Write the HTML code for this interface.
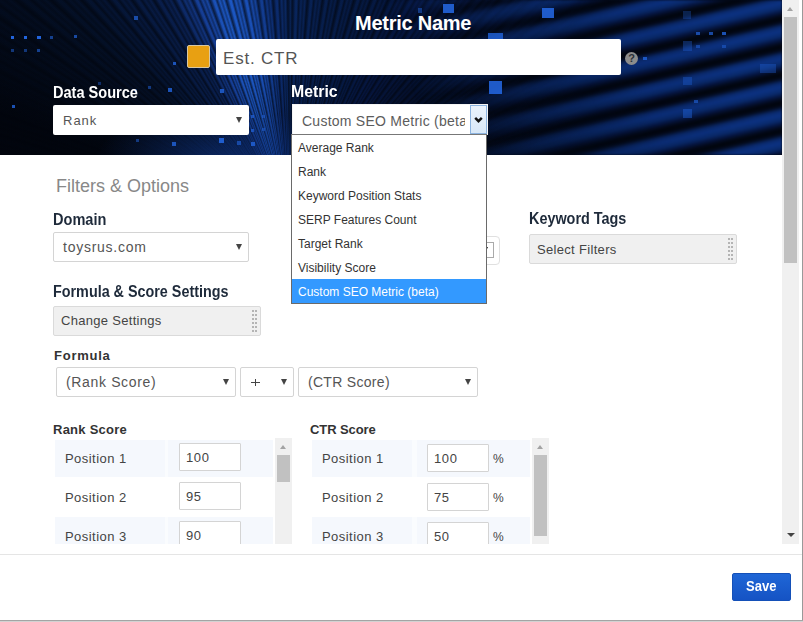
<!DOCTYPE html>
<html><head><meta charset="utf-8">
<style>
*{box-sizing:border-box;margin:0;padding:0}
html,body{width:803px;height:622px;overflow:hidden;background:#fff;font-family:"Liberation Sans",sans-serif}
.a{position:absolute}
.t{position:absolute;white-space:nowrap}
#hdr{left:0;top:0;width:782px;height:155px;background:#030916;overflow:hidden}
#hdr .L{position:absolute;left:0;top:0;width:782px;height:155px}
.sq{position:absolute;background:#2264dc}
.wbox{background:#fff;border-radius:2px}
.arr{position:absolute;width:0;height:0;border-left:3.5px solid transparent;border-right:3.5px solid transparent;border-top:6px solid #444}
.lblw{color:#fff;font-weight:bold}
.lbld{color:#1e2a3a;font-weight:bold}
.sel{position:absolute;background:#fff;border:1px solid #d4d4d4;border-radius:2px}
.gbox{position:absolute;background:#f0f0f0;border:1px solid #dadada;border-radius:2px}
.grip{position:absolute;width:6px;background-image:radial-gradient(circle,#b8b8b8 0.9px,transparent 1.1px);background-size:4px 4px}
.row{position:absolute;background:#f5f8fd}
.inp{position:absolute;background:#fff;border:1px solid #d4d4d4;border-radius:1px}
</style></head><body>
<div id="hdr" class="a">
<div class="L" style="background:conic-gradient(from 0deg at 290px 220px, #0a2860 0deg, #09245a 3deg, #071e4c 10deg, #061a44 20deg, #061640 30deg, #05112e 45deg, #030a1c 60deg, #02060f 90deg, #030816 100deg, #02050c 255deg, #02050d 290deg, #051128 315deg, #061636 320deg, #0a2050 331deg, #163f98 337deg, #1e5ccc 343deg, #1a50b8 349deg, #0c2c70 356deg, #0a2860 360deg)"></div>
<div class="L" style="filter:blur(0.5px);background:repeating-conic-gradient(from 0deg at 290px 220px, rgba(2,6,15,0.05) 0deg, rgba(2,6,15,0.7) 0.6deg, rgba(2,6,15,0.45) 1deg, rgba(2,6,15,0.05) 1.4deg, rgba(2,6,15,0.0) 1.8deg, rgba(2,6,15,0.6) 2.3deg, rgba(2,6,15,0.05) 2.9deg, rgba(2,6,15,0.4) 3.4deg, rgba(2,6,15,0.05) 3.9deg)"></div>
<div class="L" style="background:radial-gradient(ellipse 110px 130px at 290px 200px, rgba(3,10,30,0.55), rgba(3,10,30,0.3) 50%, rgba(3,10,30,0) 100%)"></div>
<div class="L" style="background:radial-gradient(ellipse 130px 50px at 225px 160px, rgba(16,56,140,0.6), rgba(16,56,140,0) 100%)"></div>
<div class="L" style="filter:blur(1.2px);background:repeating-linear-gradient(167deg, #030a1c 0px, #01040c 3px, #030a1c 6.5px, #0a2a6e 11px, #0c3282 15px, #092a6c 20px, #051540 24px, #030a1c 27.3px);-webkit-mask-image:linear-gradient(70deg, transparent 52%, rgba(0,0,0,0.5) 65%, rgba(0,0,0,0.9) 80%, #000 92%)"></div>
<div class="sq" style="left:11px;top:36px;width:3px;height:3px;opacity:1"></div>
<div class="sq" style="left:24px;top:36px;width:3px;height:3px;opacity:1"></div>
<div class="sq" style="left:37px;top:36px;width:4px;height:3px;opacity:1"></div>
<div class="sq" style="left:50px;top:36px;width:3px;height:3px;opacity:0.6"></div>
<div class="sq" style="left:74px;top:35px;width:3px;height:3px;opacity:0.7"></div>
<div class="sq" style="left:11px;top:49px;width:3px;height:3px;opacity:0.5"></div>
<div class="sq" style="left:24px;top:49px;width:3px;height:3px;opacity:0.5"></div>
<div class="sq" style="left:37px;top:49px;width:3px;height:3px;opacity:0.6"></div>
<div class="sq" style="left:12px;top:105px;width:3px;height:3px;opacity:0.8"></div>
<div class="sq" style="left:134px;top:16px;width:4px;height:4px;opacity:0.7"></div>
<div class="sq" style="left:173px;top:62px;width:3px;height:3px;opacity:0.8"></div>
<div class="sq" style="left:98px;top:82px;width:3px;height:3px;opacity:0.4"></div>
<div class="sq" style="left:148px;top:86px;width:3px;height:3px;opacity:0.5"></div>
<div class="sq" style="left:168px;top:88px;width:4px;height:4px;opacity:0.8"></div>
<div class="sq" style="left:220px;top:89px;width:4px;height:4px;opacity:0.8"></div>
<div class="sq" style="left:134px;top:89px;width:3px;height:3px;opacity:0.4"></div>
<div class="sq" style="left:136px;top:139px;width:3px;height:3px;opacity:0.5"></div>
<div class="sq" style="left:172px;top:142px;width:4px;height:4px;opacity:0.8"></div>
<div class="sq" style="left:219px;top:138px;width:5px;height:5px;opacity:0.9"></div>
<div class="sq" style="left:237px;top:141px;width:4px;height:4px;opacity:0.6"></div>
<div class="sq" style="left:251px;top:142px;width:4px;height:4px;opacity:0.8"></div>
<div class="sq" style="left:251px;top:115px;width:3px;height:3px;opacity:0.7"></div>
<div class="sq" style="left:251px;top:129px;width:3px;height:3px;opacity:0.7"></div>
<div class="sq" style="left:262px;top:115px;width:3px;height:3px;opacity:0.5"></div>
<div class="sq" style="left:262px;top:128px;width:3px;height:3px;opacity:0.5"></div>
<div class="sq" style="left:443px;top:4px;width:11px;height:9px;opacity:0.9"></div>
<div class="sq" style="left:418px;top:8px;width:4px;height:5px;opacity:0.5"></div>
<div class="sq" style="left:542px;top:8px;width:12px;height:10px;opacity:0.9"></div>
<div class="sq" style="left:488px;top:33px;width:15px;height:6px;opacity:0.8"></div>
<div class="sq" style="left:489px;top:81px;width:13px;height:13px;opacity:0.9"></div>
<div class="sq" style="left:696px;top:32px;width:4px;height:3px;opacity:0.7"></div>
<div class="sq" style="left:709px;top:32px;width:4px;height:3px;opacity:0.7"></div>
<div class="sq" style="left:722px;top:32px;width:4px;height:3px;opacity:0.8"></div>
<div class="sq" style="left:696px;top:45px;width:4px;height:3px;opacity:0.5"></div>
<div class="sq" style="left:722px;top:45px;width:4px;height:3px;opacity:0.5"></div>
<div class="sq" style="left:683px;top:41px;width:9px;height:10px;opacity:0.35"></div>
<div class="sq" style="left:683px;top:77px;width:9px;height:8px;opacity:0.35"></div>
<div class="sq" style="left:683px;top:109px;width:9px;height:9px;opacity:0.45"></div>
<div class="sq" style="left:694px;top:100px;width:4px;height:3px;opacity:0.6"></div>
<div class="sq" style="left:643px;top:57px;width:4px;height:3px;opacity:0.8"></div>
<div class="sq" style="left:760px;top:64px;width:16px;height:9px;opacity:0.35"></div>
<div class="sq" style="left:683px;top:11px;width:8px;height:8px;opacity:0.3"></div>
</div>

<!-- header content -->
<div class="t lblw" style="left:355px;top:13px;font-size:20px;line-height:20px;letter-spacing:-0.25px">Metric Name</div>
<div class="a" style="left:187px;top:45px;width:23px;height:23px;background:#e8a012;border:1px solid #d8c7a2;border-radius:2px"></div>
<div class="a wbox" style="left:216px;top:39px;width:405px;height:36px"></div>
<div class="t" style="left:223px;top:50px;font-size:17px;line-height:17px;color:#555;letter-spacing:0.8px">Est. CTR</div>
<div class="a" style="left:625px;top:52px;width:13px;height:13px;border-radius:50%;background:#8c8c8c;color:#2a2f38;font-size:11px;line-height:13px;text-align:center;font-weight:bold">?</div>

<div class="t lblw" style="left:53px;top:85px;font-size:16px;line-height:16px;transform:scaleX(0.91);transform-origin:0 0">Data Source</div>
<div class="a wbox" style="left:53px;top:105px;width:196px;height:30px"></div>
<div class="t" style="left:63px;top:114px;font-size:13px;line-height:13px;color:#555;letter-spacing:1.0px">Rank</div>
<div class="arr" style="left:236px;top:117px"></div>

<div class="t lblw" style="left:291px;top:84px;font-size:16px;line-height:16px;transform:scaleX(0.99);transform-origin:0 0">Metric</div>
<div class="a" style="left:292px;top:104px;width:196px;height:31px;background:#fff;border:1px solid #f4f4f4;border-bottom:none"></div>
<div class="a" style="left:292px;top:105px;width:173px;height:29px;overflow:hidden"><div class="t" style="left:10px;top:9px;font-size:14px;line-height:14px;color:#5c5c5c;letter-spacing:0.25px">Custom SEO Metric (beta)</div></div>
<div class="a" style="left:470px;top:105px;width:17px;height:29px;background:linear-gradient(#eaf3fc,#d8e8f8);border:1px solid #8cb4e0"></div>
<svg class="a" style="left:473px;top:115px" width="11" height="9" viewBox="0 0 11 9"><path d="M2.2 2.8 L5.5 6.2 L8.8 2.8" fill="none" stroke="#111" stroke-width="2.4"/></svg>

<!-- Body -->
<div class="t" style="left:56px;top:177px;font-size:18px;line-height:18px;color:#888">Filters &amp; Options</div>

<div class="t lbld" style="left:53px;top:212px;font-size:16px;line-height:16px;transform:scaleX(0.91);transform-origin:0 0">Domain</div>
<div class="sel" style="left:53px;top:232px;width:196px;height:30px"></div>
<div class="t" style="left:63px;top:240px;font-size:14px;line-height:14px;color:#555;letter-spacing:0.75px">toysrus.com</div>
<div class="arr" style="left:236px;top:244px"></div>

<!-- hidden select behind dropdown -->
<div class="a" style="left:460px;top:236px;width:40px;height:29px;border:1px solid #e0e0e0;border-radius:4px;background:#fff"></div>
<div class="a" style="left:470px;top:242px;width:24px;height:16px;border:1px solid #aaa;background:#fff"></div>
<div class="arr" style="left:482px;top:247px;border-top-color:#111"></div>

<div class="t lbld" style="left:529px;top:211px;font-size:16px;line-height:16px;transform:scaleX(0.9);transform-origin:0 0">Keyword Tags</div>
<div class="gbox" style="left:529px;top:234px;width:208px;height:30px"></div>
<div class="t" style="left:537px;top:243px;font-size:13px;line-height:13px;color:#444;letter-spacing:0.32px">Select Filters</div>
<svg class="a" style="left:728px;top:238px" width="5" height="22" fill="#b4b4b4"><rect x="0" y="0" width="2" height="2"/><rect x="3" y="0" width="2" height="2"/><rect x="0" y="4" width="2" height="2"/><rect x="3" y="4" width="2" height="2"/><rect x="0" y="8" width="2" height="2"/><rect x="3" y="8" width="2" height="2"/><rect x="0" y="12" width="2" height="2"/><rect x="3" y="12" width="2" height="2"/><rect x="0" y="16" width="2" height="2"/><rect x="3" y="16" width="2" height="2"/><rect x="0" y="20" width="2" height="2"/><rect x="3" y="20" width="2" height="2"/></svg>

<div class="t lbld" style="left:53px;top:284px;font-size:16px;line-height:16px;transform:scaleX(0.897);transform-origin:0 0">Formula &amp; Score Settings</div>
<div class="gbox" style="left:53px;top:306px;width:208px;height:30px"></div>
<div class="t" style="left:61px;top:314px;font-size:13px;line-height:13px;color:#444;letter-spacing:0.3px">Change Settings</div>
<svg class="a" style="left:252px;top:310px" width="5" height="22" fill="#b4b4b4"><rect x="0" y="0" width="2" height="2"/><rect x="3" y="0" width="2" height="2"/><rect x="0" y="4" width="2" height="2"/><rect x="3" y="4" width="2" height="2"/><rect x="0" y="8" width="2" height="2"/><rect x="3" y="8" width="2" height="2"/><rect x="0" y="12" width="2" height="2"/><rect x="3" y="12" width="2" height="2"/><rect x="0" y="16" width="2" height="2"/><rect x="3" y="16" width="2" height="2"/><rect x="0" y="20" width="2" height="2"/><rect x="3" y="20" width="2" height="2"/></svg>

<div class="t" style="left:54px;top:349px;font-size:13px;line-height:13px;color:#333;font-weight:bold;letter-spacing:0.75px">Formula</div>
<div class="sel" style="left:56px;top:367px;width:180px;height:30px"></div>
<div class="t" style="left:66px;top:375px;font-size:14px;line-height:14px;color:#555;letter-spacing:0.65px">(Rank Score)</div>
<div class="arr" style="left:223px;top:379px"></div>
<div class="sel" style="left:240px;top:367px;width:54px;height:30px"></div>
<div class="a" style="left:251px;top:382px;width:9px;height:1.3px;background:#444"></div><div class="a" style="left:254.8px;top:379px;width:1.3px;height:7px;background:#444"></div>
<div class="arr" style="left:281px;top:379px"></div>
<div class="sel" style="left:298px;top:367px;width:180px;height:30px"></div>
<div class="t" style="left:308px;top:375px;font-size:14px;line-height:14px;color:#555;letter-spacing:0.3px">(CTR Score)</div>
<div class="arr" style="left:465px;top:379px"></div>

<div class="t" style="left:53px;top:423px;font-size:13px;line-height:13px;color:#333;font-weight:bold;letter-spacing:0.25px">Rank Score</div>
<div class="t" style="left:310px;top:423px;font-size:13px;line-height:13px;color:#333;font-weight:bold;letter-spacing:-0.1px">CTR Score</div>

<!-- Rank score table -->
<div class="a" style="left:55px;top:438px;width:238px;height:106px;overflow:hidden">
  <div class="row" style="left:0;top:2px;width:218px;height:37px;background:linear-gradient(90deg,#f5f8fd 110px,#fafcfe 110px,#fafcfe 113px,#f5f8fd 113px)"></div>
  <div class="row" style="left:0;top:79px;width:218px;height:37px;background:linear-gradient(90deg,#f5f8fd 110px,#fafcfe 110px,#fafcfe 113px,#f5f8fd 113px)"></div>
  <div class="t" style="left:10px;top:14px;font-size:13px;line-height:13px;color:#444;letter-spacing:0.45px">Position 1</div>
  <div class="t" style="left:10px;top:53px;font-size:13px;line-height:13px;color:#444;letter-spacing:0.45px">Position 2</div>
  <div class="t" style="left:10px;top:92px;font-size:13px;line-height:13px;color:#444;letter-spacing:0.45px">Position 3</div>
  <div class="inp" style="left:124px;top:5px;width:62px;height:28px"></div>
  <div class="inp" style="left:124px;top:44px;width:62px;height:28px"></div>
  <div class="inp" style="left:124px;top:83px;width:62px;height:28px"></div>
  <div class="t" style="left:131px;top:13px;font-size:13px;line-height:13px;color:#444;letter-spacing:0.6px">100</div>
  <div class="t" style="left:131px;top:52px;font-size:13px;line-height:13px;color:#444;letter-spacing:0.6px">95</div>
  <div class="t" style="left:131px;top:91px;font-size:13px;line-height:13px;color:#444;letter-spacing:0.6px">90</div>
  <div class="a" style="left:220px;top:0;width:17px;height:106px;background:#f0f0f0"></div>
  <div class="a" style="left:222px;top:17px;width:13px;height:27px;background:#c1c1c1"></div>
  <div class="a" style="left:225px;top:7px;width:0;height:0;border-left:3.5px solid transparent;border-right:3.5px solid transparent;border-bottom:4px solid #a3a3a3"></div>
</div>

<!-- CTR score table -->
<div class="a" style="left:312px;top:438px;width:238px;height:106px;overflow:hidden">
  <div class="row" style="left:0;top:2px;width:218px;height:37px;background:linear-gradient(90deg,#f5f8fd 100px,#fafcfe 100px,#fafcfe 105px,#f5f8fd 105px)"></div>
  <div class="row" style="left:0;top:79px;width:218px;height:37px;background:linear-gradient(90deg,#f5f8fd 100px,#fafcfe 100px,#fafcfe 105px,#f5f8fd 105px)"></div>
  <div class="t" style="left:10px;top:14px;font-size:13px;line-height:13px;color:#444;letter-spacing:0.45px">Position 1</div>
  <div class="t" style="left:10px;top:53px;font-size:13px;line-height:13px;color:#444;letter-spacing:0.45px">Position 2</div>
  <div class="t" style="left:10px;top:92px;font-size:13px;line-height:13px;color:#444;letter-spacing:0.45px">Position 3</div>
  <div class="inp" style="left:115px;top:6px;width:62px;height:28px"></div>
  <div class="inp" style="left:115px;top:45px;width:62px;height:28px"></div>
  <div class="inp" style="left:115px;top:84px;width:62px;height:28px"></div>
  <div class="t" style="left:122px;top:14px;font-size:13px;line-height:13px;color:#444;letter-spacing:0.6px">100</div>
  <div class="t" style="left:122px;top:53px;font-size:13px;line-height:13px;color:#444;letter-spacing:0.6px">75</div>
  <div class="t" style="left:122px;top:92px;font-size:13px;line-height:13px;color:#444;letter-spacing:0.6px">50</div>
  <div class="t" style="left:181px;top:15px;font-size:12px;line-height:13px;color:#444">%</div>
  <div class="t" style="left:181px;top:54px;font-size:12px;line-height:13px;color:#444">%</div>
  <div class="t" style="left:181px;top:93px;font-size:12px;line-height:13px;color:#444">%</div>
  <div class="a" style="left:220px;top:0;width:17px;height:106px;background:#f0f0f0"></div>
  <div class="a" style="left:222px;top:17px;width:13px;height:81px;background:#c1c1c1"></div>
  <div class="a" style="left:225px;top:7px;width:0;height:0;border-left:3.5px solid transparent;border-right:3.5px solid transparent;border-bottom:4px solid #a3a3a3"></div>
</div>

<!-- dropdown list -->
<div class="a" style="left:291px;top:134px;width:196px;height:170px;background:#fff;border:1px solid #6a6a6a;border-top-color:#777">
  <div class="a" style="left:0;top:144px;width:194px;height:24px;background:#3399ff"></div>
  <div class="t" style="left:6px;top:7px;font-size:12px;line-height:12px;color:#333">Average Rank</div>
  <div class="t" style="left:6px;top:31px;font-size:12px;line-height:12px;color:#333">Rank</div>
  <div class="t" style="left:6px;top:55px;font-size:12px;line-height:12px;color:#333">Keyword Position Stats</div>
  <div class="t" style="left:6px;top:79px;font-size:12px;line-height:12px;color:#333">SERP Features Count</div>
  <div class="t" style="left:6px;top:103px;font-size:12px;line-height:12px;color:#333">Target Rank</div>
  <div class="t" style="left:6px;top:127px;font-size:12px;line-height:12px;color:#333">Visibility Score</div>
  <div class="t" style="left:6px;top:151px;font-size:12px;line-height:12px;color:#fff">Custom SEO Metric (beta)</div>
</div>

<!-- main scrollbar -->
<div class="a" style="left:782px;top:0;width:17px;height:544px;background:#f0f0f0"></div>
<div class="a" style="left:784px;top:17px;width:13px;height:246px;background:#c1c1c1"></div>
<div class="a" style="left:787px;top:7px;width:0;height:0;border-left:3.5px solid transparent;border-right:3.5px solid transparent;border-bottom:4px solid #a3a3a3"></div>
<div class="a" style="left:786.5px;top:533px;width:0;height:0;border-left:4px solid transparent;border-right:4px solid transparent;border-top:4.5px solid #444"></div>

<!-- footer -->
<div class="a" style="left:0;top:554px;width:802px;height:1px;background:#e5e5e5"></div>
<div class="a" style="left:732px;top:573px;width:59px;height:28px;border-radius:2px;background:linear-gradient(#1f66d6,#1553c4);border:1px solid #1450b8"></div>
<div class="t" style="left:746px;top:579px;font-size:14.5px;line-height:14.5px;color:#fff;font-weight:bold;transform:scaleX(0.9);transform-origin:0 0">Save</div>
<div class="a" style="left:802px;top:0;width:1px;height:621px;background:#999"></div>
<div class="a" style="left:0;top:620px;width:803px;height:1px;background:#a4a4a4"></div><div class="a" style="left:0;top:621px;width:803px;height:1px;background:#d2d2d2"></div>
</body></html>
